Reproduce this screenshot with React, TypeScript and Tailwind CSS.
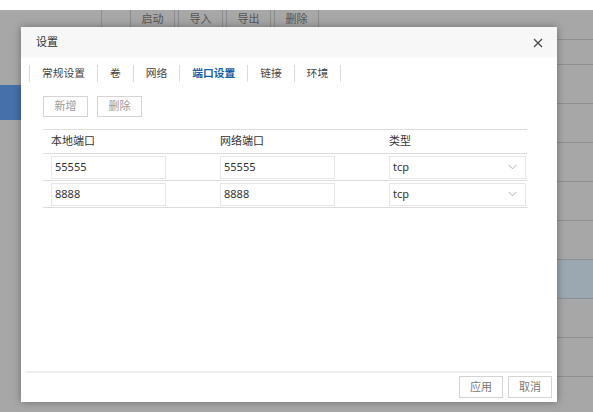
import React from 'react';

const tabs = ['常规设置', '卷', '网络', '端口设置', '链接', '环境'];
const toolbar = ['启动', '导入', '导出', '删除'];

const ports = [
    { local: '55555', remote: '55555', type: 'tcp' },
    { local: '8888', remote: '8888', type: 'tcp' },
];

const ChevronDown = () => (
    <svg width="9" height="6" viewBox="0 0 9 6" fill="none">
        <path d="M0.5 0.8 L4.5 4.8 L8.5 0.8" stroke="#a9a9a9" strokeWidth="0.9" />
    </svg>
);

const CloseIcon = () => (
    <svg width="10" height="10" viewBox="0 0 10 10" fill="none">
        <path d="M1 1 L9 9 M9 1 L1 9" stroke="#4a4a4a" strokeWidth="1.3" />
    </svg>
);

const App = () => {
    return (
        <div
            className="relative w-[593px] h-[412px] overflow-hidden bg-white text-[11px] text-[#333]"
            style={{ fontFamily: '"Noto Sans", "Noto Sans CJK SC", sans-serif' }}
        >
            {/* page behind the mask */}
            <div className="h-[10px] bg-white" />
            <div className="flex h-[402px] bg-[#a7a7a7]">
                <aside className="w-[101px] pt-[75px]">
                    <div className="h-[35px] bg-[#4670aa]" />
                </aside>
                <main className="flex-1">
                    <div className="flex h-[30px] gap-[3px] border-b border-l border-[#8f8f8f] pl-[28px]">
                        {toolbar.map((t) => (
                            <div
                                key={t}
                                className="flex h-[20px] w-[45px] items-center justify-center border border-t-0 border-[#8c8c8c] text-[#555]"
                            >
                                {t}
                            </div>
                        ))}
                    </div>
                    <div className="h-[25px] border-b border-[#8f8f8f]" />
                    {Array.from({ length: 9 }).map((_, i) => (
                        <div
                            key={i}
                            className={
                                i === 5
                                    ? 'h-[39px] border-b border-[#8f8f8f] bg-[#9ba7b1]'
                                    : 'h-[39px] border-b border-[#8f8f8f]'
                            }
                        />
                    ))}
                </main>
            </div>

            {/* dialog */}
            <div className="absolute left-[21px] top-[27px] flex h-[375px] w-[536px] flex-col bg-white shadow-[0_0_8px_rgba(0,0,0,0.35)]">
                <div className="flex h-[31px] items-center justify-between bg-[#f7f7f7] pl-[15px] pr-[14px]">
                    <span className="text-[#333]">设置</span>
                    <CloseIcon />
                </div>

                <div className="flex-1 px-[8px] pt-[5px]">
                    {/* tabs */}
                    <div className="flex h-[20px] items-center text-[10.75px]">
                        {tabs.map((t, i) => (
                            <div
                                key={t}
                                className={
                                    'flex h-[17px] items-center border-l border-[#dadada] px-[12px] leading-none' +
                                    (i === tabs.length - 1 ? ' border-r' : '')
                                }
                            >
                                <span className={t === '端口设置' ? 'font-bold text-[#1b5fa8]' : 'text-[#444]'}>{t}</span>
                            </div>
                        ))}
                    </div>

                    {/* actions */}
                    <div className="mt-[13px] flex gap-[9px] pl-[14px]">
                        <button className="h-[21px] w-[45px] border border-[#d4d4d4] bg-white text-[#999]">新增</button>
                        <button className="h-[21px] w-[45px] border border-[#d4d4d4] bg-white text-[#999]">删除</button>
                    </div>

                    {/* port table */}
                    <table className="ml-[14px] mt-[12px] w-[484px] border-collapse">
                        <thead>
                            <tr className="h-[24px] border-t border-b border-[#dcdcdc]">
                                <th className="w-[169px] px-[8px] text-left font-normal">本地端口</th>
                                <th className="w-[169px] px-[8px] text-left font-normal">网络端口</th>
                                <th className="px-[8px] text-left font-normal">类型</th>
                            </tr>
                        </thead>
                        <tbody>
                            {ports.map((p, i) => (
                                <tr key={i} className="h-[27px] border-b border-[#dcdcdc]">
                                    <td className="px-[8px]">
                                        <div className="flex h-[23px] w-[115px] items-center border border-[#e6e6e6] px-[3px] text-[#333]">
                                            {p.local}
                                        </div>
                                    </td>
                                    <td className="px-[8px]">
                                        <div className="flex h-[23px] w-[115px] items-center border border-[#e6e6e6] px-[3px] text-[#333]">
                                            {p.remote}
                                        </div>
                                    </td>
                                    <td className="pl-[8px] pr-[1px]">
                                        <div className="flex h-[23px] w-[137px] items-center justify-between border border-[#e6e6e6] pl-[3px] pr-[8px] text-[#333]">
                                            <span>{p.type}</span>
                                            <ChevronDown />
                                        </div>
                                    </td>
                                </tr>
                            ))}
                        </tbody>
                    </table>
                </div>

                {/* footer */}
                <div className="mx-[5px] flex h-[31px] justify-end gap-[5px] border-t-2 border-[#eeeeee] pt-[3px]">
                    <button className="h-[22px] w-[44px] border border-[#d4d4d4] bg-white text-[#777]">应用</button>
                    <button className="h-[22px] w-[44px] border border-[#d4d4d4] bg-white text-[#777]">取消</button>
                </div>
            </div>
        </div>
    );
};

export default App;
